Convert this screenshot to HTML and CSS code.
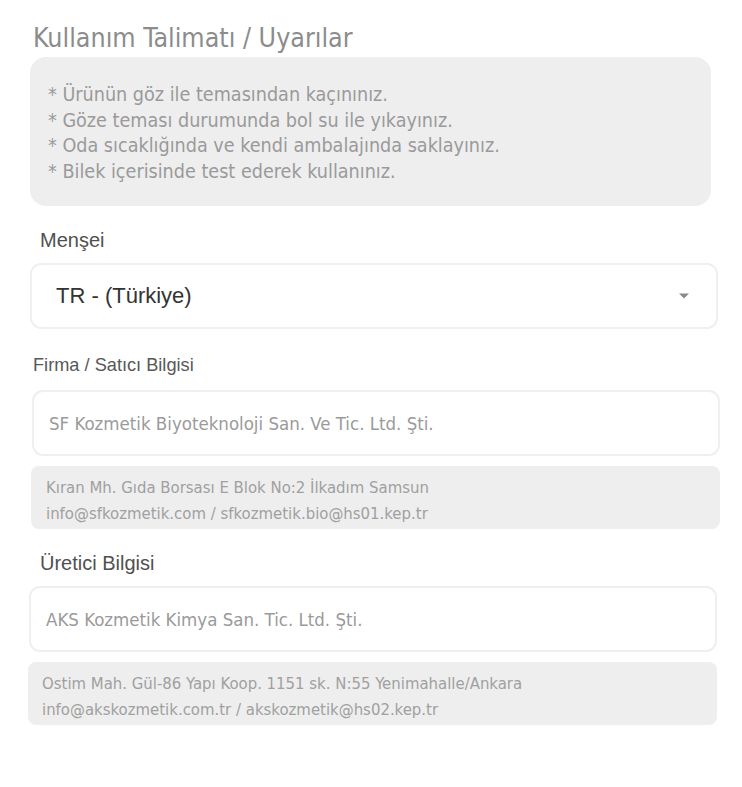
FILE: index.html
```html
<!DOCTYPE html>
<html lang="tr">
<head>
<meta charset="utf-8">
<title>Kullanım Talimatı</title>
<link rel="stylesheet" href="styles.css">
</head>
<body>
<main class="page">
  <h2 class="title">Kullanım Talimatı / Uyarılar</h2>
  <div class="notes">
    <p>* Ürünün göz ile temasından kaçınınız.</p>
    <p>* Göze teması durumunda bol su ile yıkayınız.</p>
    <p>* Oda sıcaklığında ve kendi ambalajında saklayınız.</p>
    <p>* Bilek içerisinde test ederek kullanınız.</p>
  </div>

  <div class="label label-origin">Menşei</div>
  <div class="select">
    <span class="select-value">TR - (Türkiye)</span>
    <svg class="caret" width="12" height="8" viewBox="0 0 12 8"><path d="M1 1.5h10L6 6.5z" fill="#8a8a8a"/></svg>
  </div>

  <div class="label label-firm">Firma / Satıcı Bilgisi</div>
  <div class="field field-firm">SF Kozmetik Biyoteknoloji San. Ve Tic. Ltd. Şti.</div>
  <div class="info info-firm">
    <p>Kıran Mh. Gıda Borsası E Blok No:2 İlkadım Samsun</p>
    <p>info@sfkozmetik.com / sfkozmetik.bio@hs01.kep.tr</p>
  </div>

  <div class="label label-maker">Üretici Bilgisi</div>
  <div class="field field-maker">AKS Kozmetik Kimya San. Tic. Ltd. Şti.</div>
  <div class="info info-maker">
    <p>Ostim Mah. Gül-86 Yapı Koop. 1151 sk. N:55 Yenimahalle/Ankara</p>
    <p>info@akskozmetik.com.tr / akskozmetik@hs02.kep.tr</p>
  </div>
</main>
</body>
</html>
```

FILE: styles.css
```css
* { box-sizing: border-box; }
html, body { margin: 0; padding: 0; background: #ffffff; }
body { font-family: "DejaVu Sans Condensed", "DejaVu Sans", sans-serif; }
p { margin: 0; }

.page {
  width: 742px;
  padding: 21px 0 40px 30px;
  display: flex;
  flex-direction: column;
}

.title {
  margin: 0 0 0 3px;
  font-weight: normal;
  font-size: 26.6px;
  line-height: 34px;
  color: #8c8c8c;
}

.notes {
  width: 681px;
  height: 149px;
  margin-top: 2px;
  background: #eeeeee;
  border-radius: 16px;
  padding: 25px 18px 0 18px;
  color: #9a9a9a;
  font-size: 19.6px;
  line-height: 25.7px;
}

.label {
  font-family: "Liberation Sans", Arial, sans-serif;
  color: #505050;
  font-size: 20px;
  line-height: 22px;
}
.label-origin { margin: 23px 0 0 10px; }
.label-firm { margin: 25px 0 0 3px; font-size: 18.2px; color: #585858; }
.label-maker { margin: 23px 0 0 10px; }

.select {
  width: 688px;
  height: 66px;
  margin-top: 12px;
  border: 2px solid #efefef;
  border-radius: 11px;
  display: flex;
  align-items: center;
  justify-content: space-between;
  padding: 0 26px 0 24px;
}
.select-value {
  font-family: "Liberation Sans", Arial, sans-serif;
  font-size: 22px;
  color: #333333;
}
.caret { display: block; }

.field {
  width: 688px;
  height: 66px;
  border: 2px solid #efefef;
  border-radius: 11px;
  display: flex;
  align-items: center;
  padding: 0 15px;
  color: #9a9a9a;
  font-size: 18.5px;
}
.field-firm { margin: 14px 0 0 2px; }
.field-maker { margin: 12px 0 0 -1px; }

.info {
  width: 689px;
  height: 63px;
  margin-top: 10px;
  background: #eeeeee;
  border-radius: 8px;
  padding: 9px 14px 0 15px;
  color: #a0a0a0;
  font-size: 16.6px;
  line-height: 26px;
}
.info-firm { margin-left: 1px; }
.info-maker { margin-left: -2px; padding-left: 14px; }
```
